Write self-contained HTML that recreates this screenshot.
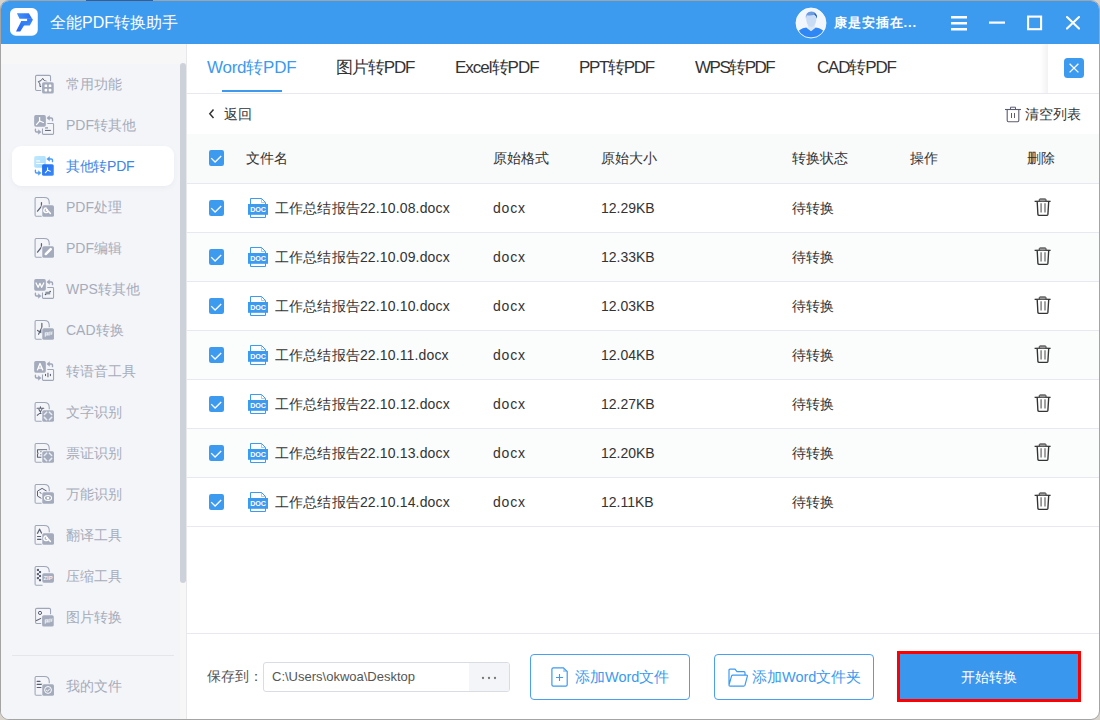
<!DOCTYPE html>
<html><head><meta charset="utf-8">
<style>
*{margin:0;padding:0;box-sizing:border-box}
html,body{width:1100px;height:720px;overflow:hidden;background:#d8d3cb}
body{font-family:"Liberation Sans",sans-serif;position:relative}
.win{position:absolute;left:0;top:0;width:1100px;height:720px;border:1px solid #a4a4a4;border-radius:9px;background:#fff;overflow:hidden}
.abs{position:absolute}
.titlebar{position:absolute;left:1px;top:1px;width:1098px;height:43px;background:#3c9aef;border-radius:8px 8px 0 0}
.apptitle{position:absolute;left:50px;top:13px;color:#fff;font-size:16px;line-height:20px}
.uname{position:absolute;left:834px;top:13px;color:#fff;font-size:13px;font-weight:700;line-height:18px;letter-spacing:0.9px;top:14px}
.sidebg{position:absolute;left:1px;top:44px;width:185px;height:675px;background:#f4f5f9;border-radius:0 0 0 8px}
.sidetop{position:absolute;left:1px;top:44px;width:185px;height:20px;background:#f7f7f7}
.track{position:absolute;left:180px;top:44px;width:6px;height:675px;background:#f7f7f7}
.sborder{position:absolute;left:186px;top:44px;width:1px;height:675px;background:#e8e8ea}
.st{position:absolute;left:66px;font-size:14px;line-height:18px;color:#a6acba;white-space:nowrap;font-weight:350}
.actbg{position:absolute;left:12px;top:146px;width:162px;height:40px;background:#fff;border-radius:9px;box-shadow:0 2px 5px rgba(60,70,100,0.05)}
.scroll{position:absolute;left:180px;top:63px;width:6px;height:520px;background:#cdd1da;border-radius:3px}
.sep{position:absolute;left:12px;top:655px;width:162px;height:1px;background:#e4e6ec}
.tab{position:absolute;top:58px;font-size:17px;line-height:20px;color:#333;white-space:nowrap;font-weight:350}
.tab.on{color:#3c9aef}
.tx{position:absolute;font-size:14px;line-height:18px;color:#333;white-space:nowrap;font-weight:350}
.row{position:absolute;left:187px;width:912px;height:49px;border-bottom:1px solid #e8e9f0;background:#fff}
.row.alt{background:#fbfcfc}
</style></head><body>
<div class="win">
</div>
<div class="abs" style="left:86px;top:0;width:67px;height:1px;background:#415b86"></div>
<div class="titlebar"></div>
<svg style="position:absolute;left:8px;top:6px" width="32" height="32" viewBox="0 0 720 720"><defs><linearGradient id="lg1" x1="0" y1="0" x2="1" y2="0"><stop offset="0" stop-color="#3e93f8"/><stop offset="1" stop-color="#2c6ef5"/></linearGradient><linearGradient id="lg2" x1="0" y1="0" x2="1" y2="1"><stop offset="0" stop-color="#2a66f5"/><stop offset="1" stop-color="#3d97f8"/></linearGradient><linearGradient id="lg3" x1="0" y1="1" x2="1" y2="0"><stop offset="0" stop-color="#2660f4"/><stop offset="1" stop-color="#348af7"/></linearGradient></defs><rect x="45" y="45" width="625" height="625" rx="130" fill="#fff"/><path d="M200,165 H470 L543,285 H260 Z" fill="url(#lg1)"/><path d="M430,284 H543 L560,310 L490,440 H340 L300,340 H430 Z" fill="url(#lg2)"/><path d="M300,340 H420 L360,440 L275,575 H180 Z" fill="url(#lg3)"/></svg>
<div class="apptitle">全能PDF转换助手</div>
<svg style="position:absolute;left:793px;top:5px" width="36" height="36" viewBox="0 0 720 720"><defs><clipPath id="ac"><circle cx="360" cy="360" r="295"/></clipPath></defs><circle cx="360" cy="360" r="300" fill="#f2f7fe"/><g clip-path="url(#ac)"><path d="M295,370 L295,455 L360,525 L435,455 L435,370 Z" fill="#dbe5f3"/><path d="M80,570 Q110,475 265,450 L360,525 L455,450 Q610,475 640,570 L640,720 H80 Z" fill="#2f86f5"/><path d="M262,250 Q262,420 365,440 Q470,420 470,250 Q470,160 365,160 Q262,160 262,250 Z" fill="#c9dcf5"/><path d="M258,275 Q240,130 370,128 Q490,135 480,270 Q465,215 430,195 Q350,220 275,205 Q262,235 258,275 Z" fill="#6b9ce2"/><path d="M425,160 Q490,195 480,270 Q468,220 430,195 Z" fill="#1d5bc6"/></g><circle cx="360" cy="360" r="300" fill="none" stroke="#fff" stroke-width="16"/></svg>
<div class="uname">康是安插在...</div>
<svg class="abs" style="left:940px;top:8px" width="150" height="30" viewBox="0 0 150 30">
  <path d="M11,9.2 H27 M11,15.2 H27 M11,21.2 H27" stroke="#fff" stroke-width="2.4"/>
  <path d="M49,14.6 H65" stroke="#fff" stroke-width="2.2"/>
  <rect x="88.1" y="8.6" width="13" height="12.6" fill="none" stroke="#fff" stroke-width="2.1"/>
  <path d="M127,9 L139,20.6 M139,9 L127,20.6" stroke="#fff" stroke-width="2.1" stroke-linecap="round"/>
</svg>
<div class="sidebg"></div>
<div class="sidetop"></div>
<div class="track"></div>
<div class="sborder"></div>
<div class="scroll"></div>
<div class="actbg"></div>
<svg style="position:absolute;left:30px;top:69px" width="30" height="30" viewBox="0 0 720 720"><rect x="133" y="152" width="360" height="365" rx="30" fill="none" stroke="#9ea6b7" stroke-width="26"/><path d="M305,225 L346,280 L410,301 L372,357 L370,424 L305,405 L240,424 L238,357 L200,301 L264,280 Z" fill="none" stroke="#596072" stroke-width="24" stroke-linejoin="round"/><rect x="268" y="293" width="324" height="319" rx="55" fill="#f4f5f9"/><rect x="290" y="315" width="280" height="275" rx="40" fill="#a3abbc"/><rect x="350" y="372" width="62" height="62" rx="14" fill="#fff"/><rect x="450" y="372" width="62" height="62" rx="14" fill="#fff"/><rect x="350" y="475" width="62" height="62" rx="14" fill="#fff"/><rect x="450" y="475" width="62" height="62" rx="14" fill="#fff"/></svg><div class="st" style="top:75px;color:#a6acba">常用功能</div>
<svg style="position:absolute;left:30px;top:110px" width="30" height="30" viewBox="0 0 720 720"><path d="M300,445 V565 Q300,585 320,585 H545 Q565,585 565,565 V340 Q565,322 545,322 H415" fill="none" stroke="#9ea6b7" stroke-width="26"/><rect x="360" y="410" width="72" height="38" fill="#a3abbc"/><path d="M360,490 H500" stroke="#596072" stroke-width="24"/><path d="M540,255 V218 Q540,190 512,190 H450" fill="none" stroke="#9ea6b7" stroke-width="34" stroke-linecap="round"/><path d="M470,135 L400,190 L470,245 Z" fill="#9ea6b7" stroke="#9ea6b7" stroke-width="10" stroke-linejoin="round"/><path d="M130,462 V500 Q130,528 158,528 H215" fill="none" stroke="#9ea6b7" stroke-width="34" stroke-linecap="round"/><path d="M200,473 L270,528 L200,583 Z" fill="#9ea6b7" stroke="#9ea6b7" stroke-width="10" stroke-linejoin="round"/><rect x="78" y="98" width="324" height="324" rx="55" fill="#f4f5f9"/><rect x="100" y="120" width="280" height="280" rx="40" fill="#a3abbc"/><path d="M230,180.0 V265" stroke="#fff" stroke-width="30" stroke-linecap="round"/><path d="M230,265 L155.0,350.0" stroke="#fff" stroke-width="30" stroke-linecap="round"/><path d="M230,265 L320.0,300.0" stroke="#fff" stroke-width="30" stroke-linecap="round"/></svg><div class="st" style="top:116px;color:#a6acba">PDF转其他</div>
<svg style="position:absolute;left:30px;top:151px" width="30" height="30" viewBox="0 0 720 720"><path d="M540,255 V218 Q540,190 512,190 H450" fill="none" stroke="#4c9cf3" stroke-width="34" stroke-linecap="round"/><path d="M470,135 L400,190 L470,245 Z" fill="#4c9cf3" stroke="#4c9cf3" stroke-width="10" stroke-linejoin="round"/><path d="M130,462 V500 Q130,528 158,528 H215" fill="none" stroke="#4c9cf3" stroke-width="34" stroke-linecap="round"/><path d="M200,473 L270,528 L200,583 Z" fill="#4c9cf3" stroke="#4c9cf3" stroke-width="10" stroke-linejoin="round"/><defs><linearGradient id="lb" x1="0" y1="0" x2="1" y2="1"><stop offset="0" stop-color="#bfeafe"/><stop offset="1" stop-color="#a6dafc"/></linearGradient><linearGradient id="db" x1="0" y1="0" x2="1" y2="1"><stop offset="0" stop-color="#1f6cf0"/><stop offset="1" stop-color="#3b8cf7"/></linearGradient></defs><rect x="100" y="120" width="280" height="280" rx="40" fill="url(#lb)"/><rect x="150" y="220" width="90" height="36" fill="#fff" opacity="0.8"/><rect x="148" y="288" width="188" height="24" fill="#fff"/><rect x="290" y="315" width="280" height="280" rx="40" fill="url(#db)"/><path d="M422,400.8 V462" stroke="#fff" stroke-width="26" stroke-linecap="round"/><path d="M422,462 L368.0,523.2" stroke="#fff" stroke-width="26" stroke-linecap="round"/><path d="M422,462 L486.8,487.2" stroke="#fff" stroke-width="26" stroke-linecap="round"/></svg><div class="st" style="top:157px;color:#3d86e6;letter-spacing:-0.3px">其他转PDF</div>
<svg style="position:absolute;left:30px;top:192px" width="30" height="30" viewBox="0 0 720 720"><path d="M122,560 V160 Q122,132 150,132 H345 Q462,132 462,250 V330" fill="none" stroke="#9ea6b7" stroke-width="26"/><path d="M122,560 Q122,582 150,582 H300" fill="none" stroke="#9ea6b7" stroke-width="26"/><path d="M275,255.0 V340" stroke="#596072" stroke-width="30" stroke-linecap="round"/><path d="M275,345 L180,460" stroke="#596072" stroke-width="30" stroke-linecap="round"/><rect x="273" y="293" width="324" height="324" rx="55" fill="#f4f5f9"/><rect x="295" y="315" width="280" height="280" rx="40" fill="#a3abbc"/><path d="M395,385 A55,55 0 1 0 440,455" fill="none" stroke="#fff" stroke-width="34"/><path d="M430,450 L490,515" stroke="#fff" stroke-width="36" stroke-linecap="round"/><circle cx="405" cy="430" r="30" fill="#fff"/><path d="M395,380 L405,425" stroke="#fff" stroke-width="20"/></svg><div class="st" style="top:198px;color:#a6acba">PDF处理</div>
<svg style="position:absolute;left:30px;top:233px" width="30" height="30" viewBox="0 0 720 720"><path d="M122,560 V160 Q122,132 150,132 H345 Q462,132 462,250 V330" fill="none" stroke="#9ea6b7" stroke-width="26"/><path d="M122,560 Q122,582 150,582 H300" fill="none" stroke="#9ea6b7" stroke-width="26"/><path d="M275,255 V340 L180,460" fill="none" stroke="#596072" stroke-width="30" stroke-linecap="round"/><rect x="273" y="293" width="324" height="324" rx="55" fill="#f4f5f9"/><rect x="295" y="315" width="280" height="280" rx="40" fill="#a3abbc"/><path d="M378,505 L498,385" stroke="#fff" stroke-width="60" stroke-linecap="round"/></svg><div class="st" style="top:239px;color:#a6acba">PDF编辑</div>
<svg style="position:absolute;left:30px;top:274px" width="30" height="30" viewBox="0 0 720 720"><path d="M300,445 V565 Q300,585 320,585 H545 Q565,585 565,565 V340 Q565,322 545,322 H415" fill="none" stroke="#9ea6b7" stroke-width="26"/><path d="M370,425 H485 V490 H370 Z" fill="#8e95a3"/><circle cx="485" cy="418" r="18" fill="#4a5060"/><circle cx="372" cy="490" r="18" fill="#4a5060"/><path d="M540,255 V218 Q540,190 512,190 H450" fill="none" stroke="#9ea6b7" stroke-width="34" stroke-linecap="round"/><path d="M470,135 L400,190 L470,245 Z" fill="#9ea6b7" stroke="#9ea6b7" stroke-width="10" stroke-linejoin="round"/><path d="M130,462 V500 Q130,528 158,528 H215" fill="none" stroke="#9ea6b7" stroke-width="34" stroke-linecap="round"/><path d="M200,473 L270,528 L200,583 Z" fill="#9ea6b7" stroke="#9ea6b7" stroke-width="10" stroke-linejoin="round"/><rect x="78" y="98" width="324" height="324" rx="55" fill="#f4f5f9"/><rect x="100" y="120" width="280" height="280" rx="40" fill="#a3abbc"/><path d="M145,215 L195,320 L240,225 L280,320 L330,215" fill="none" stroke="#fff" stroke-width="30" stroke-linejoin="round" stroke-linecap="round"/></svg><div class="st" style="top:280px;color:#a6acba">WPS转其他</div>
<svg style="position:absolute;left:30px;top:315px" width="30" height="30" viewBox="0 0 720 720"><path d="M122,560 V160 Q122,132 150,132 H345 Q462,132 462,250 V330" fill="none" stroke="#9ea6b7" stroke-width="26"/><path d="M122,560 Q122,582 150,582 H300" fill="none" stroke="#9ea6b7" stroke-width="26"/><path d="M285,200 V300 L205,460 M285,300 L265,410 M180,370 L275,425" fill="none" stroke="#596072" stroke-width="28" stroke-linecap="round"/><rect x="273" y="293" width="324" height="324" rx="55" fill="#f4f5f9"/><rect x="295" y="315" width="280" height="280" rx="40" fill="#a3abbc"/><path d="M367,420 V522 M367,430 H420 V478 H367" fill="none" stroke="#e6e9ef" stroke-width="28"/><path d="M482,395 V478 H430 V430 H482" fill="none" stroke="#e6e9ef" stroke-width="24"/><path d="M520,478 V410 Q520,398 535,398 M500,432 H540" fill="none" stroke="#e6e9ef" stroke-width="22"/></svg><div class="st" style="top:321px;color:#a6acba">CAD转换</div>
<svg style="position:absolute;left:30px;top:356px" width="30" height="30" viewBox="0 0 720 720"><path d="M300,445 V565 Q300,585 320,585 H545 Q565,585 565,565 V340 Q565,322 545,322 H415" fill="none" stroke="#9ea6b7" stroke-width="26"/><path d="M372,440 V470 M490,440 V470" stroke="#596072" stroke-width="26" stroke-linecap="round"/><path d="M430,400 V510" stroke="#8e95a3" stroke-width="36"/><path d="M540,255 V218 Q540,190 512,190 H450" fill="none" stroke="#9ea6b7" stroke-width="34" stroke-linecap="round"/><path d="M470,135 L400,190 L470,245 Z" fill="#9ea6b7" stroke="#9ea6b7" stroke-width="10" stroke-linejoin="round"/><path d="M130,462 V500 Q130,528 158,528 H215" fill="none" stroke="#9ea6b7" stroke-width="34" stroke-linecap="round"/><path d="M200,473 L270,528 L200,583 Z" fill="#9ea6b7" stroke="#9ea6b7" stroke-width="10" stroke-linejoin="round"/><rect x="78" y="98" width="324" height="324" rx="55" fill="#f4f5f9"/><rect x="100" y="120" width="280" height="280" rx="40" fill="#a3abbc"/><path d="M175,345 L240,180 L310,345 M205,290 H280" fill="none" stroke="#fff" stroke-width="32" stroke-linejoin="round"/></svg><div class="st" style="top:362px;color:#a6acba">转语音工具</div>
<svg style="position:absolute;left:30px;top:397px" width="30" height="30" viewBox="0 0 720 720"><path d="M122,560 V160 Q122,132 150,132 H345 Q462,132 462,250 V330" fill="none" stroke="#9ea6b7" stroke-width="26"/><path d="M122,560 Q122,582 150,582 H300" fill="none" stroke="#9ea6b7" stroke-width="26"/><path d="M170,270 H330 M250,235 V270 M215,300 Q260,400 330,430 M290,295 Q250,400 175,440" fill="none" stroke="#596072" stroke-width="28" stroke-linecap="round"/><rect x="273" y="293" width="324" height="324" rx="55" fill="#f4f5f9"/><rect x="295" y="315" width="280" height="280" rx="40" fill="#a3abbc"/><path d="M345,420 L400,365" stroke="#e8ebf1" stroke-width="38" stroke-linecap="round"/><path d="M465,365 L520,420" stroke="#e8ebf1" stroke-width="38" stroke-linecap="round"/><path d="M345,490 L400,545" stroke="#e8ebf1" stroke-width="38" stroke-linecap="round"/><path d="M465,545 L520,490" stroke="#e8ebf1" stroke-width="38" stroke-linecap="round"/></svg><div class="st" style="top:403px;color:#a6acba">文字识别</div>
<svg style="position:absolute;left:30px;top:438px" width="30" height="30" viewBox="0 0 720 720"><path d="M122,560 V160 Q122,132 150,132 H345 Q462,132 462,250 V330" fill="none" stroke="#9ea6b7" stroke-width="26"/><path d="M122,560 Q122,582 150,582 H300" fill="none" stroke="#9ea6b7" stroke-width="26"/><path d="M180,280 H400 V460 H180 V400 Q205,370 180,340 Z" fill="none" stroke="#596072" stroke-width="26" stroke-linejoin="round"/><path d="M240,330 H290 M240,400 H290" stroke="#8e95a3" stroke-width="26"/><rect x="273" y="293" width="324" height="324" rx="55" fill="#f4f5f9"/><rect x="295" y="315" width="280" height="280" rx="40" fill="#a3abbc"/><path d="M345,420 L400,365" stroke="#e8ebf1" stroke-width="38" stroke-linecap="round"/><path d="M465,365 L520,420" stroke="#e8ebf1" stroke-width="38" stroke-linecap="round"/><path d="M345,490 L400,545" stroke="#e8ebf1" stroke-width="38" stroke-linecap="round"/><path d="M465,545 L520,490" stroke="#e8ebf1" stroke-width="38" stroke-linecap="round"/></svg><div class="st" style="top:444px;color:#a6acba">票证识别</div>
<svg style="position:absolute;left:30px;top:479px" width="30" height="30" viewBox="0 0 720 720"><path d="M122,560 V160 Q122,132 150,132 H345 Q462,132 462,250 V330" fill="none" stroke="#9ea6b7" stroke-width="26"/><path d="M122,560 Q122,582 150,582 H300" fill="none" stroke="#9ea6b7" stroke-width="26"/><path d="M290,225 L400,290 V410 L290,475 L180,410 V290 Z M230,320 L290,355 L340,325" fill="none" stroke="#596072" stroke-width="24" stroke-linejoin="round"/><rect x="273" y="293" width="324" height="324" rx="55" fill="#f4f5f9"/><rect x="295" y="315" width="280" height="280" rx="40" fill="#a3abbc"/><ellipse cx="432" cy="455" rx="85" ry="58" fill="none" stroke="#fff" stroke-width="26"/><circle cx="432" cy="455" r="30" fill="#fff"/></svg><div class="st" style="top:485px;color:#a6acba">万能识别</div>
<svg style="position:absolute;left:30px;top:520px" width="30" height="30" viewBox="0 0 720 720"><path d="M122,560 V160 Q122,132 150,132 H345 Q462,132 462,250 V330" fill="none" stroke="#9ea6b7" stroke-width="26"/><path d="M122,560 Q122,582 150,582 H300" fill="none" stroke="#9ea6b7" stroke-width="26"/><path d="M175,330 L230,220 L285,330" fill="none" stroke="#596072" stroke-width="30" stroke-linejoin="round"/><path d="M170,395 H270 M170,465 H290" stroke="#596072" stroke-width="28"/><rect x="273" y="293" width="324" height="324" rx="55" fill="#f4f5f9"/><rect x="295" y="315" width="280" height="280" rx="40" fill="#a3abbc"/><path d="M395,385 A55,55 0 1 0 440,455" fill="none" stroke="#fff" stroke-width="34"/><path d="M430,450 L490,515" stroke="#fff" stroke-width="36" stroke-linecap="round"/><circle cx="405" cy="430" r="30" fill="#fff"/><path d="M395,380 L405,425" stroke="#fff" stroke-width="20"/></svg><div class="st" style="top:526px;color:#a6acba">翻译工具</div>
<svg style="position:absolute;left:30px;top:561px" width="30" height="30" viewBox="0 0 720 720"><path d="M122,560 V160 Q122,132 150,132 H345 Q462,132 462,250 V330" fill="none" stroke="#9ea6b7" stroke-width="26"/><path d="M122,560 Q122,582 150,582 H300" fill="none" stroke="#9ea6b7" stroke-width="26"/><rect x="165" y="190" width="50" height="50" fill="#596072"/><rect x="215" y="240" width="50" height="50" fill="#596072"/><rect x="165" y="290" width="50" height="50" fill="#596072"/><rect x="215" y="335" width="50" height="50" fill="#596072"/><rect x="165" y="385" width="50" height="50" fill="#596072"/><rect x="215" y="435" width="50" height="50" fill="#596072"/><rect x="273" y="270" width="324" height="272" rx="55" fill="#f4f5f9"/><rect x="295" y="292" width="280" height="228" rx="40" fill="#a3abbc"/><text x="432" y="458" font-family="Liberation Sans" font-weight="bold" font-size="140" fill="#f0f2f6" text-anchor="middle">ZIP</text></svg><div class="st" style="top:567px;color:#a6acba">压缩工具</div>
<svg style="position:absolute;left:30px;top:602px" width="30" height="30" viewBox="0 0 720 720"><rect x="133" y="152" width="360" height="365" rx="30" fill="none" stroke="#9ea6b7" stroke-width="26"/><circle cx="240" cy="262" r="38" fill="none" stroke="#596072" stroke-width="24"/><path d="M145,450 L300,375" stroke="#596072" stroke-width="26"/><rect x="268" y="293" width="324" height="319" rx="55" fill="#f4f5f9"/><rect x="290" y="315" width="280" height="275" rx="40" fill="#a3abbc"/><path d="M367,420 V522 M367,430 H420 V478 H367" fill="none" stroke="#e6e9ef" stroke-width="28"/><path d="M482,395 V478 H430 V430 H482" fill="none" stroke="#e6e9ef" stroke-width="24"/><path d="M520,478 V410 Q520,398 535,398 M500,432 H540" fill="none" stroke="#e6e9ef" stroke-width="22"/></svg><div class="st" style="top:608px;color:#a6acba">图片转换</div>
<svg style="position:absolute;left:30px;top:671px" width="30" height="30" viewBox="0 0 720 720"><path d="M122,560 V160 Q122,132 150,132 H345 Q462,132 462,250 V330" fill="none" stroke="#9ea6b7" stroke-width="26"/><path d="M122,560 Q122,582 150,582 H300" fill="none" stroke="#9ea6b7" stroke-width="26"/><path d="M172,250 H240 M172,322 H300 M172,395 H300" stroke="#596072" stroke-width="28" stroke-linecap="round"/><rect x="273" y="293" width="324" height="324" rx="55" fill="#f4f5f9"/><rect x="295" y="315" width="280" height="280" rx="40" fill="#a3abbc"/><circle cx="432" cy="455" r="82" fill="none" stroke="#fff" stroke-width="24"/><path d="M392,460 L420,485 L470,432" fill="none" stroke="#fff" stroke-width="24" stroke-linecap="round"/></svg><div class="st" style="top:677px">我的文件</div>

<div class="sep"></div>
<div class="abs" style="left:187px;top:93px;width:912px;height:1px;background:#e8e9ee"></div>
<div class="abs" style="left:1040px;top:44px;width:8px;height:49px;background:linear-gradient(to right,rgba(0,0,0,0),rgba(0,0,0,0.05))"></div>
<span class="tab on" style="left:207px;letter-spacing:-0.25px">Word转PDF</span>
<span class="tab " style="left:336px;letter-spacing:-1.1px">图片转PDF</span>
<span class="tab " style="left:455px;letter-spacing:-1.0px">Excel转PDF</span>
<span class="tab " style="left:579px;letter-spacing:-1.33px">PPT转PDF</span>
<span class="tab " style="left:695px;letter-spacing:-1.5px">WPS转PDF</span>
<span class="tab " style="left:817px;letter-spacing:-1.17px">CAD转PDF</span>
<div class="abs" style="left:222px;top:90px;width:60px;height:2px;background:#3c9aef"></div>
<svg class="abs" style="left:1064px;top:58px" width="20" height="20" viewBox="0 0 20 20"><rect width="20" height="20" rx="3.5" fill="#3c9aef"/><path d="M5.6,5.8 L14.4,14.4 M14.4,5.8 L5.6,14.4" stroke="#fff" stroke-width="1.3"/></svg>
<svg class="abs" style="left:207px;top:107px" width="10" height="14" viewBox="0 0 10 14"><path d="M6.5,2.5 L2.8,6.8 L6.5,11" fill="none" stroke="#333" stroke-width="1.5"/></svg>
<div class="tx" style="left:224px;top:105px">返回</div>
<svg class="abs" style="left:1004px;top:106px" width="18" height="17" viewBox="0 0 18 17"><path d="M1,3.5 H17" stroke="#5c5c70" stroke-width="1.1"/><path d="M6.5,3.3 V1.2 H11.5 V3.3" fill="none" stroke="#5c5c70" stroke-width="1"/><path d="M3.2,3.8 V14.6 Q3.2,15.8 4.4,15.8 H13.6 Q14.8,15.8 14.8,14.6 V3.8" fill="none" stroke="#5c5c70" stroke-width="1.1"/><path d="M7.5,7 V12 M10.5,7 V12" stroke="#5c5c70" stroke-width="1"/></svg>
<div class="tx" style="left:1025px;top:105px">清空列表</div>
<div class="abs" style="left:187px;top:134px;width:912px;height:50px;background:#f9fafa;border-bottom:1px solid #e8e9f0"></div>
<svg style="position:absolute;left:209px;top:150px" width="15" height="16" viewBox="0 0 15 16"><rect width="15" height="16" rx="2.2" fill="#3c9aef"/><path d="M2.2,8.1 L6.1,12 L12.2,6" fill="none" stroke="#fff" stroke-width="1.3"/></svg>
<div class="tx" style="left:246px;top:149px">文件名</div>
<div class="tx" style="left:493px;top:149px">原始格式</div>
<div class="tx" style="left:601px;top:149px">原始大小</div>
<div class="tx" style="left:792px;top:149px">转换状态</div>
<div class="tx" style="left:910px;top:149px">操作</div>
<div class="tx" style="left:1027px;top:149px">删除</div>
<div class="row" style="top:184px"></div><svg style="position:absolute;left:209px;top:200px" width="15" height="16" viewBox="0 0 15 16"><rect width="15" height="16" rx="2.2" fill="#3c9aef"/><path d="M2.2,8.1 L6.1,12 L12.2,6" fill="none" stroke="#fff" stroke-width="1.3"/></svg><svg style="position:absolute;left:248px;top:198px" width="20" height="20" viewBox="0 0 20 20"><path d="M2.5,6 V0.5 H13.5 L17.5,4.5 V6 M17.5,14.5 V19.5 H2.5 V14.5" fill="none" stroke="#3c9aef" stroke-width="1"/><path d="M13.5,0.5 V4.5 H17.5" fill="none" stroke="#3c9aef" stroke-width="0.8" opacity="0.6"/><rect x="0" y="6" width="20" height="10.8" fill="#3c9aef"/><text x="10" y="14.3" font-family="Liberation Sans" font-weight="bold" font-size="7.2" fill="#fff" text-anchor="middle" letter-spacing="-0.2">DOC</text></svg><div class="tx" style="left:275px;top:199px;letter-spacing:0.15px">工作总结报告22.10.08.docx</div><div class="tx" style="left:493px;top:199px;letter-spacing:0.8px">docx</div><div class="tx" style="left:601px;top:199px">12.29KB</div><div class="tx" style="left:792px;top:199px">待转换</div><svg style="position:absolute;left:1034px;top:198px" width="18" height="19" viewBox="0 0 18 19"><path d="M0.6,3.4 Q8.5,2.9 16.6,3.4" fill="none" stroke="#333" stroke-width="1.3"/><path d="M5.3,3 V1.6 Q5.3,0.9 6,0.9 H11.3 Q12,0.9 12,1.6 V3" fill="#999" stroke="#444" stroke-width="1"/><path d="M3.2,3.6 L3.9,16.4 Q4,17.4 5.2,17.4 H12.6 Q13.8,17.4 13.9,16.4 L14.7,3.6" fill="none" stroke="#333" stroke-width="1.35"/><path d="M7.1,5.3 V14.5 M11,5.3 V14.5" stroke="#8a8a8a" stroke-width="1.6"/></svg>
<div class="row alt" style="top:233px"></div><svg style="position:absolute;left:209px;top:249px" width="15" height="16" viewBox="0 0 15 16"><rect width="15" height="16" rx="2.2" fill="#3c9aef"/><path d="M2.2,8.1 L6.1,12 L12.2,6" fill="none" stroke="#fff" stroke-width="1.3"/></svg><svg style="position:absolute;left:248px;top:247px" width="20" height="20" viewBox="0 0 20 20"><path d="M2.5,6 V0.5 H13.5 L17.5,4.5 V6 M17.5,14.5 V19.5 H2.5 V14.5" fill="none" stroke="#3c9aef" stroke-width="1"/><path d="M13.5,0.5 V4.5 H17.5" fill="none" stroke="#3c9aef" stroke-width="0.8" opacity="0.6"/><rect x="0" y="6" width="20" height="10.8" fill="#3c9aef"/><text x="10" y="14.3" font-family="Liberation Sans" font-weight="bold" font-size="7.2" fill="#fff" text-anchor="middle" letter-spacing="-0.2">DOC</text></svg><div class="tx" style="left:275px;top:248px;letter-spacing:0.15px">工作总结报告22.10.09.docx</div><div class="tx" style="left:493px;top:248px;letter-spacing:0.8px">docx</div><div class="tx" style="left:601px;top:248px">12.33KB</div><div class="tx" style="left:792px;top:248px">待转换</div><svg style="position:absolute;left:1034px;top:247px" width="18" height="19" viewBox="0 0 18 19"><path d="M0.6,3.4 Q8.5,2.9 16.6,3.4" fill="none" stroke="#333" stroke-width="1.3"/><path d="M5.3,3 V1.6 Q5.3,0.9 6,0.9 H11.3 Q12,0.9 12,1.6 V3" fill="#999" stroke="#444" stroke-width="1"/><path d="M3.2,3.6 L3.9,16.4 Q4,17.4 5.2,17.4 H12.6 Q13.8,17.4 13.9,16.4 L14.7,3.6" fill="none" stroke="#333" stroke-width="1.35"/><path d="M7.1,5.3 V14.5 M11,5.3 V14.5" stroke="#8a8a8a" stroke-width="1.6"/></svg>
<div class="row" style="top:282px"></div><svg style="position:absolute;left:209px;top:298px" width="15" height="16" viewBox="0 0 15 16"><rect width="15" height="16" rx="2.2" fill="#3c9aef"/><path d="M2.2,8.1 L6.1,12 L12.2,6" fill="none" stroke="#fff" stroke-width="1.3"/></svg><svg style="position:absolute;left:248px;top:296px" width="20" height="20" viewBox="0 0 20 20"><path d="M2.5,6 V0.5 H13.5 L17.5,4.5 V6 M17.5,14.5 V19.5 H2.5 V14.5" fill="none" stroke="#3c9aef" stroke-width="1"/><path d="M13.5,0.5 V4.5 H17.5" fill="none" stroke="#3c9aef" stroke-width="0.8" opacity="0.6"/><rect x="0" y="6" width="20" height="10.8" fill="#3c9aef"/><text x="10" y="14.3" font-family="Liberation Sans" font-weight="bold" font-size="7.2" fill="#fff" text-anchor="middle" letter-spacing="-0.2">DOC</text></svg><div class="tx" style="left:275px;top:297px;letter-spacing:0.15px">工作总结报告22.10.10.docx</div><div class="tx" style="left:493px;top:297px;letter-spacing:0.8px">docx</div><div class="tx" style="left:601px;top:297px">12.03KB</div><div class="tx" style="left:792px;top:297px">待转换</div><svg style="position:absolute;left:1034px;top:296px" width="18" height="19" viewBox="0 0 18 19"><path d="M0.6,3.4 Q8.5,2.9 16.6,3.4" fill="none" stroke="#333" stroke-width="1.3"/><path d="M5.3,3 V1.6 Q5.3,0.9 6,0.9 H11.3 Q12,0.9 12,1.6 V3" fill="#999" stroke="#444" stroke-width="1"/><path d="M3.2,3.6 L3.9,16.4 Q4,17.4 5.2,17.4 H12.6 Q13.8,17.4 13.9,16.4 L14.7,3.6" fill="none" stroke="#333" stroke-width="1.35"/><path d="M7.1,5.3 V14.5 M11,5.3 V14.5" stroke="#8a8a8a" stroke-width="1.6"/></svg>
<div class="row alt" style="top:331px"></div><svg style="position:absolute;left:209px;top:347px" width="15" height="16" viewBox="0 0 15 16"><rect width="15" height="16" rx="2.2" fill="#3c9aef"/><path d="M2.2,8.1 L6.1,12 L12.2,6" fill="none" stroke="#fff" stroke-width="1.3"/></svg><svg style="position:absolute;left:248px;top:345px" width="20" height="20" viewBox="0 0 20 20"><path d="M2.5,6 V0.5 H13.5 L17.5,4.5 V6 M17.5,14.5 V19.5 H2.5 V14.5" fill="none" stroke="#3c9aef" stroke-width="1"/><path d="M13.5,0.5 V4.5 H17.5" fill="none" stroke="#3c9aef" stroke-width="0.8" opacity="0.6"/><rect x="0" y="6" width="20" height="10.8" fill="#3c9aef"/><text x="10" y="14.3" font-family="Liberation Sans" font-weight="bold" font-size="7.2" fill="#fff" text-anchor="middle" letter-spacing="-0.2">DOC</text></svg><div class="tx" style="left:275px;top:346px;letter-spacing:0.15px">工作总结报告22.10.11.docx</div><div class="tx" style="left:493px;top:346px;letter-spacing:0.8px">docx</div><div class="tx" style="left:601px;top:346px">12.04KB</div><div class="tx" style="left:792px;top:346px">待转换</div><svg style="position:absolute;left:1034px;top:345px" width="18" height="19" viewBox="0 0 18 19"><path d="M0.6,3.4 Q8.5,2.9 16.6,3.4" fill="none" stroke="#333" stroke-width="1.3"/><path d="M5.3,3 V1.6 Q5.3,0.9 6,0.9 H11.3 Q12,0.9 12,1.6 V3" fill="#999" stroke="#444" stroke-width="1"/><path d="M3.2,3.6 L3.9,16.4 Q4,17.4 5.2,17.4 H12.6 Q13.8,17.4 13.9,16.4 L14.7,3.6" fill="none" stroke="#333" stroke-width="1.35"/><path d="M7.1,5.3 V14.5 M11,5.3 V14.5" stroke="#8a8a8a" stroke-width="1.6"/></svg>
<div class="row" style="top:380px"></div><svg style="position:absolute;left:209px;top:396px" width="15" height="16" viewBox="0 0 15 16"><rect width="15" height="16" rx="2.2" fill="#3c9aef"/><path d="M2.2,8.1 L6.1,12 L12.2,6" fill="none" stroke="#fff" stroke-width="1.3"/></svg><svg style="position:absolute;left:248px;top:394px" width="20" height="20" viewBox="0 0 20 20"><path d="M2.5,6 V0.5 H13.5 L17.5,4.5 V6 M17.5,14.5 V19.5 H2.5 V14.5" fill="none" stroke="#3c9aef" stroke-width="1"/><path d="M13.5,0.5 V4.5 H17.5" fill="none" stroke="#3c9aef" stroke-width="0.8" opacity="0.6"/><rect x="0" y="6" width="20" height="10.8" fill="#3c9aef"/><text x="10" y="14.3" font-family="Liberation Sans" font-weight="bold" font-size="7.2" fill="#fff" text-anchor="middle" letter-spacing="-0.2">DOC</text></svg><div class="tx" style="left:275px;top:395px;letter-spacing:0.15px">工作总结报告22.10.12.docx</div><div class="tx" style="left:493px;top:395px;letter-spacing:0.8px">docx</div><div class="tx" style="left:601px;top:395px">12.27KB</div><div class="tx" style="left:792px;top:395px">待转换</div><svg style="position:absolute;left:1034px;top:394px" width="18" height="19" viewBox="0 0 18 19"><path d="M0.6,3.4 Q8.5,2.9 16.6,3.4" fill="none" stroke="#333" stroke-width="1.3"/><path d="M5.3,3 V1.6 Q5.3,0.9 6,0.9 H11.3 Q12,0.9 12,1.6 V3" fill="#999" stroke="#444" stroke-width="1"/><path d="M3.2,3.6 L3.9,16.4 Q4,17.4 5.2,17.4 H12.6 Q13.8,17.4 13.9,16.4 L14.7,3.6" fill="none" stroke="#333" stroke-width="1.35"/><path d="M7.1,5.3 V14.5 M11,5.3 V14.5" stroke="#8a8a8a" stroke-width="1.6"/></svg>
<div class="row alt" style="top:429px"></div><svg style="position:absolute;left:209px;top:445px" width="15" height="16" viewBox="0 0 15 16"><rect width="15" height="16" rx="2.2" fill="#3c9aef"/><path d="M2.2,8.1 L6.1,12 L12.2,6" fill="none" stroke="#fff" stroke-width="1.3"/></svg><svg style="position:absolute;left:248px;top:443px" width="20" height="20" viewBox="0 0 20 20"><path d="M2.5,6 V0.5 H13.5 L17.5,4.5 V6 M17.5,14.5 V19.5 H2.5 V14.5" fill="none" stroke="#3c9aef" stroke-width="1"/><path d="M13.5,0.5 V4.5 H17.5" fill="none" stroke="#3c9aef" stroke-width="0.8" opacity="0.6"/><rect x="0" y="6" width="20" height="10.8" fill="#3c9aef"/><text x="10" y="14.3" font-family="Liberation Sans" font-weight="bold" font-size="7.2" fill="#fff" text-anchor="middle" letter-spacing="-0.2">DOC</text></svg><div class="tx" style="left:275px;top:444px;letter-spacing:0.15px">工作总结报告22.10.13.docx</div><div class="tx" style="left:493px;top:444px;letter-spacing:0.8px">docx</div><div class="tx" style="left:601px;top:444px">12.20KB</div><div class="tx" style="left:792px;top:444px">待转换</div><svg style="position:absolute;left:1034px;top:443px" width="18" height="19" viewBox="0 0 18 19"><path d="M0.6,3.4 Q8.5,2.9 16.6,3.4" fill="none" stroke="#333" stroke-width="1.3"/><path d="M5.3,3 V1.6 Q5.3,0.9 6,0.9 H11.3 Q12,0.9 12,1.6 V3" fill="#999" stroke="#444" stroke-width="1"/><path d="M3.2,3.6 L3.9,16.4 Q4,17.4 5.2,17.4 H12.6 Q13.8,17.4 13.9,16.4 L14.7,3.6" fill="none" stroke="#333" stroke-width="1.35"/><path d="M7.1,5.3 V14.5 M11,5.3 V14.5" stroke="#8a8a8a" stroke-width="1.6"/></svg>
<div class="row" style="top:478px"></div><svg style="position:absolute;left:209px;top:494px" width="15" height="16" viewBox="0 0 15 16"><rect width="15" height="16" rx="2.2" fill="#3c9aef"/><path d="M2.2,8.1 L6.1,12 L12.2,6" fill="none" stroke="#fff" stroke-width="1.3"/></svg><svg style="position:absolute;left:248px;top:492px" width="20" height="20" viewBox="0 0 20 20"><path d="M2.5,6 V0.5 H13.5 L17.5,4.5 V6 M17.5,14.5 V19.5 H2.5 V14.5" fill="none" stroke="#3c9aef" stroke-width="1"/><path d="M13.5,0.5 V4.5 H17.5" fill="none" stroke="#3c9aef" stroke-width="0.8" opacity="0.6"/><rect x="0" y="6" width="20" height="10.8" fill="#3c9aef"/><text x="10" y="14.3" font-family="Liberation Sans" font-weight="bold" font-size="7.2" fill="#fff" text-anchor="middle" letter-spacing="-0.2">DOC</text></svg><div class="tx" style="left:275px;top:493px;letter-spacing:0.15px">工作总结报告22.10.14.docx</div><div class="tx" style="left:493px;top:493px;letter-spacing:0.8px">docx</div><div class="tx" style="left:601px;top:493px">12.11KB</div><div class="tx" style="left:792px;top:493px">待转换</div><svg style="position:absolute;left:1034px;top:492px" width="18" height="19" viewBox="0 0 18 19"><path d="M0.6,3.4 Q8.5,2.9 16.6,3.4" fill="none" stroke="#333" stroke-width="1.3"/><path d="M5.3,3 V1.6 Q5.3,0.9 6,0.9 H11.3 Q12,0.9 12,1.6 V3" fill="#999" stroke="#444" stroke-width="1"/><path d="M3.2,3.6 L3.9,16.4 Q4,17.4 5.2,17.4 H12.6 Q13.8,17.4 13.9,16.4 L14.7,3.6" fill="none" stroke="#333" stroke-width="1.35"/><path d="M7.1,5.3 V14.5 M11,5.3 V14.5" stroke="#8a8a8a" stroke-width="1.6"/></svg>

<div class="abs" style="left:187px;top:633px;width:912px;height:1px;background:#e8e9ee"></div>
<div class="tx" style="left:207px;top:667px;color:#555">保存到：</div>
<div class="abs" style="left:263px;top:662px;width:247px;height:30px;border:1px solid #d9dce3;border-radius:3px;background:#fff;overflow:hidden">
  <div class="abs" style="right:0;top:0;width:40px;height:28px;background:#f4f5f8"></div>
  <svg class="abs" style="left:216px;top:13px" width="20" height="4" viewBox="0 0 20 4"><circle cx="3" cy="2" r="1.15" fill="#777"/><circle cx="9" cy="2" r="1.15" fill="#777"/><circle cx="15" cy="2" r="1.15" fill="#777"/></svg>
  <div class="tx" style="left:8px;top:6px;font-size:13px;line-height:16px;color:#555">C:\Users\okwoa\Desktop</div>
</div>
<div class="abs" style="left:530px;top:654px;width:160px;height:46px;border:1px solid #4a9ff0;border-radius:4px"></div>
<svg class="abs" style="left:550px;top:666px" width="19" height="22" viewBox="0 0 19 22"><path d="M3.3,1.8 H13.4 L17.2,5.6 V18.8 Q17.2,20.2 15.8,20.2 H3.3 Q1.9,20.2 1.9,18.8 V3.2 Q1.9,1.8 3.3,1.8 Z" fill="none" stroke="#3c9aef" stroke-width="1.2"/><path d="M13.2,2.4 V5.9 H16.7 Z" fill="#3c9aef" opacity="0.45"/><path d="M6,11.5 H13 M9.5,8 V15" stroke="#3c9aef" stroke-width="1.1"/></svg>
<div class="tx" style="left:575px;top:668px;font-size:14.5px;line-height:18px;color:#3c9aef">添加Word文件</div>
<div class="abs" style="left:714px;top:654px;width:160px;height:46px;border:1px solid #4a9ff0;border-radius:4px"></div>
<svg class="abs" style="left:727px;top:667px" width="22" height="21" viewBox="0 0 22 21"><path transform="translate(0,0.7)" d="M2,17 V2.5 Q2,1.5 3,1.5 H8 L10,4 H17 Q18,4 18,5 V7.5 M2,17.5 L4.5,8.5 Q4.8,7.5 6,7.5 H19.5 Q20.6,7.5 20.3,8.6 L18,17.5 Q17.7,18.5 16.6,18.5 H3 Q2,18.5 2,17.5" fill="none" stroke="#3c9aef" stroke-width="1.2"/></svg>
<div class="tx" style="left:752px;top:668px;font-size:14.5px;line-height:18px;color:#3c9aef">添加Word文件夹</div>
<div class="abs" style="left:897px;top:651px;width:184px;height:51px;border:3px solid #ff0000;background:#3a97ee"></div>
<div class="tx" style="left:897px;top:668px;width:184px;text-align:center;font-size:14px;color:#fff">开始转换</div>
</body></html>
